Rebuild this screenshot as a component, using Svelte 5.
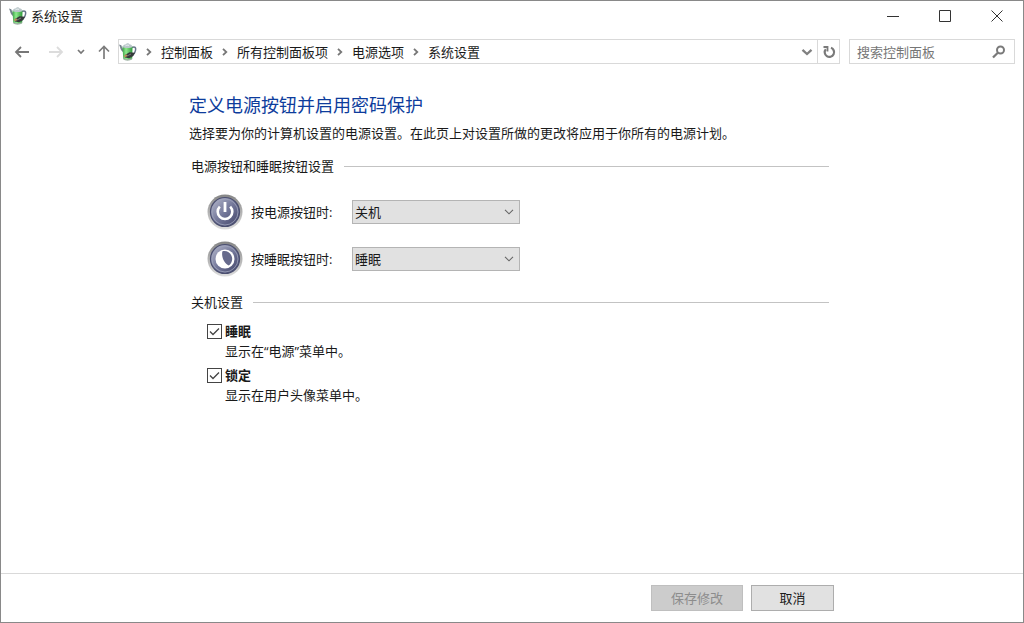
<script lang="ts">
	const crumbs = ['控制面板', '所有控制面板项', '电源选项', '系统设置'];
	const actions = ['不采取任何操作', '睡眠', '休眠', '关机', '关闭显示器'];

	let buttons = $state([
		{ id: 'power', label: '按电源按钮时:', value: '关机' },
		{ id: 'sleep', label: '按睡眠按钮时:', value: '睡眠' }
	]);

	let options = $state([
		{ id: 'opt-sleep', label: '睡眠', hint: '显示在“电源”菜单中。', checked: true },
		{ id: 'opt-lock', label: '锁定', hint: '显示在用户头像菜单中。', checked: true }
	]);

	let query = $state('');
</script>

{#snippet kettle()}
	<svg class="kettle" width="18" height="18" viewBox="0 0 18 18" aria-hidden="true">
		<defs>
			<linearGradient id="kettle-body">
				<stop offset="0" stop-color="#3da447" />
				<stop offset="0.35" stop-color="#8eea8c" />
				<stop offset="1" stop-color="#2f9a3c" />
			</linearGradient>
		</defs>
		<path d="M13 4.5c3-1.4 4 .2 3.600 2.500-.3 2-1.300 4-3 5.500" fill="none" stroke="#68748a" stroke-width="1.500" />
		<path d="M0 1.500l2.300.8 1 2.700 1.500 1.500v3C2.500 8.500 1.500 6.500 1 4z" fill="#75838c" />
		<path d="M3.500 3.500h10l-.3 12c-1 2-8 2-9 0z" fill="url(#kettle-body)" />
		<path d="M4.200 15c2 1.500 7 1.500 9 0v1.300c-2 1.900-7.500 1.900-9 0z" fill="#9fb3a4" />
		<path d="M3.500 4c.5-2 2-2.500 3.500-2.800C7.500 0 10 0 10.300 1.200c1.700.3 3 1 3.200 2.800-2 1.300-8 1.300-10 0z" fill="#b9c6c9" />
		<path d="M6.500 2.800c1-.8 2.500-.8 3.500-.4" fill="none" stroke="#f2f7f7" />
		<path d="M6 12l4.500-2.700 5.500.5-2 3.500-4 2-4-.8z" fill="#35393a" />
		<path d="M4.500 13.300l2.500-2 1.500 1-1.500 2z" fill="#b88b58" />
		<path d="M8 13l4-2" stroke="#777e78" />
	</svg>
{/snippet}

{#snippet chevron()}
	<svg class="chevron" width="6" height="8" viewBox="0 0 6 8" aria-hidden="true">
		<path d="M1 .8 4.300 4 1 7.200" fill="none" stroke="#777" stroke-width="1.800" />
	</svg>
{/snippet}

<div class="window">
	<header class="titlebar">
		{@render kettle()}
		<span class="caption">系统设置</span>
		<button aria-label="最小化">
			<svg width="12" height="12" viewBox="0 0 12 12"><path d="M0 6.500h12" /></svg>
		</button>
		<button aria-label="最大化">
			<svg width="12" height="12" viewBox="0 0 12 12"><path d="M.5.5h11v11H.5z" /></svg>
		</button>
		<button aria-label="关闭">
			<svg width="12" height="12" viewBox="0 0 12 12"><path d="M.5.5l11 11M11.500.5l-11 11" /></svg>
		</button>
	</header>

	<div class="toolbar">
		<div class="history">
			<button aria-label="后退">
				<svg width="16" height="12" viewBox="0 0 16 12"><path d="M15 6H2M7 1 2 6l5 5" stroke="#777" stroke-width="1.800" /></svg>
			</button>
			<button aria-label="前进" disabled>
				<svg width="16" height="12" viewBox="0 0 16 12"><path d="M1 6h13M9 1l5 5-5 5" stroke="#dcdcdc" stroke-width="1.800" /></svg>
			</button>
			<button class="recent" aria-label="最近浏览的位置">
				<svg width="8" height="6" viewBox="0 0 8 6"><path d="M1 1l3 3 3-3" stroke="#777" stroke-width="1.700" /></svg>
			</button>
			<button class="up" aria-label="上移">
				<svg width="12" height="14" viewBox="0 0 12 14"><path d="M6 14V1.500M1 6.500l5-5 5 5" stroke="#7c7c7c" stroke-width="1.700" /></svg>
			</button>
		</div>

		<div class="address">
			<nav aria-label="地址">
				{@render kettle()}
				{#each crumbs as crumb}
					{@render chevron()}
					<a href="#top">{crumb}</a>
				{/each}
			</nav>
			<button aria-label="以前的位置">
				<svg width="12" height="8" viewBox="0 0 12 8"><path d="M1.500 1.800 6 6l4.500-4.200" stroke="#808080" stroke-width="2.300" /></svg>
			</button>
			<button class="refresh" aria-label="刷新">
				<svg width="14" height="14" viewBox="0 0 14 14">
					<path d="M9 2.800A4.700 4.700 0 1 1 3.800 4.200" stroke="#7a7a7a" stroke-width="2.200" />
					<path d="M1.500 2h4v4.500" stroke="#7a7a7a" stroke-width="1.800" />
				</svg>
			</button>
		</div>

		<div class="search">
			<input type="text" aria-label="搜索控制面板" placeholder="搜索控制面板" bind:value={query} />
			<button aria-label="搜索">
				<svg width="14" height="14" viewBox="0 0 14 14">
					<circle cx="8.500" cy="5" r="3.500" stroke="#7a7a7a" stroke-width="2" />
					<path d="M5.800 7.800 1 12.500" stroke="#7a7a7a" stroke-width="2.300" />
				</svg>
			</button>
		</div>
	</div>

	<main>
		<h1>定义电源按钮并启用密码保护</h1>
		<p class="intro">选择要为你的计算机设置的电源设置。在此页上对设置所做的更改将应用于你所有的电源计划。</p>

		<h2>电源按钮和睡眠按钮设置</h2>
		<div class="rows">
			{#each buttons as button (button.id)}
				<div class="row">
					<svg width="36" height="36" viewBox="0 0 36 36" aria-hidden="true">
						<defs>
							<linearGradient id="rim-{button.id}" x1="0" y1="0" x2="0" y2="1">
								<stop offset="0" stop-color="#858585" />
								<stop offset="1" stop-color="#dedede" />
							</linearGradient>
							<linearGradient id="face-{button.id}" x1="0" y1="0" x2="1" y2="1">
								<stop offset="0" stop-color="#b9bccf" />
								<stop offset="0.5" stop-color="#74789a" />
								<stop offset="1" stop-color="#3d4064" />
							</linearGradient>
						</defs>
						<circle cx="18" cy="18" r="17.500" fill="url(#rim-{button.id})" />
						<circle cx="18" cy="18" r="14.500" fill="url(#face-{button.id})" stroke="#4b4f70" stroke-width="1.200" />
						<circle cx="18" cy="18" r="13" fill="none" stroke="#a0a4bd" stroke-width="0.800" />
						{#if button.id === 'power'}
							<path d="M12.800 12.600a7.300 7.300 0 1 0 10.400 0" fill="none" stroke="#fff" stroke-width="2.600" />
							<path d="M18 8v10" stroke="#fff" stroke-width="2.800" />
						{:else}
							<circle cx="18" cy="18" r="9.500" fill="#fff" />
							<path d="M15.300 10.500c3.700-1.700 9.700 1.500 9.900 7.300.1 3-1.700 5.800-3.400 6.600-4.300-2-7.500-7.400-6.500-13.900z" fill="#666a8c" />
						{/if}
					</svg>
					<label for={button.id}>{button.label}</label>
					<div class="select">
						<select id={button.id} bind:value={button.value}>
							{#each actions as action}
								<option>{action}</option>
							{/each}
						</select>
						<svg width="10" height="6" viewBox="0 0 10 6" aria-hidden="true">
							<path d="M1 .8l4 4 4-4" fill="none" stroke="#666" stroke-width="1.100" />
						</svg>
					</div>
				</div>
			{/each}
		</div>

		<h2>关机设置</h2>
		<div class="options">
			{#each options as option (option.id)}
				<div class="option">
					<span class="check">
						<input type="checkbox" id={option.id} bind:checked={option.checked} aria-describedby="{option.id}-hint" />
						<svg width="15" height="15" viewBox="0 0 15 15" aria-hidden="true">
							<path d="M3 7.500l3 3 6-6" fill="none" stroke="#444" stroke-width="1.300" />
						</svg>
					</span>
					<label for={option.id}>{option.label}</label>
					<p id="{option.id}-hint">{option.hint}</p>
				</div>
			{/each}
		</div>
	</main>

	<footer>
		<div class="actions">
			<button class="save" disabled>保存修改</button>
			<button>取消</button>
		</div>
	</footer>
</div>

<style>
	:global(body) {
		margin: 0;
		background: #fff;
	}

	.window {
		box-sizing: border-box;
		min-height: 100vh;
		display: flex;
		flex-direction: column;
		border: 1px solid #898989;
		background: #fff;
		color: #1a1a1a;
		font-family: 'Open Sans', 'Noto Sans CJK SC', sans-serif;
		font-size: 13px;
		line-height: 20px;
	}

	button,
	input,
	select {
		box-sizing: border-box;
		margin: 0;
		padding: 0;
		border: 0;
		background: none;
		color: inherit;
		font: inherit;
	}

	svg {
		display: block;
		flex: none;
	}

	button svg {
		fill: none;
	}

	.titlebar {
		display: flex;
		align-items: center;
		height: 30px;
		padding-left: 8px;
	}

	.caption {
		flex: 1;
		margin-left: 4px;
	}

	.titlebar button {
		display: grid;
		place-items: center;
		width: 52px;
		height: 30px;
		stroke: #333;
	}

	.toolbar {
		display: flex;
		padding: 8px 8px 0 12px;
	}

	.history {
		display: flex;
		align-items: center;
		width: 105px;
	}

	.history button {
		display: grid;
		place-items: center;
		width: 18px;
		height: 25px;
		margin-right: 16px;
	}

	.history button.recent {
		width: 8px;
		margin: 0 12px 0 -4px;
	}

	.history button.up {
		width: 14px;
		margin: 0;
	}

	.address,
	.search {
		box-sizing: border-box;
		display: flex;
		height: 25px;
		border: 1px solid #d9d9d9;
	}

	.address {
		flex: 1;
		margin-right: 9px;
	}

	.address nav {
		flex: 1;
		display: flex;
		align-items: center;
	}

	.address .chevron {
		margin: 0 9px;
	}

	.address a {
		color: inherit;
		text-decoration: none;
	}

	.address button,
	.search button {
		display: grid;
		place-items: center;
		width: 20px;
	}

	.address .refresh {
		width: 22px;
		border-left: 1px solid #d9d9d9;
	}

	.search {
		width: 166px;
		padding: 0 5px 0 7px;
	}

	.search input {
		flex: 1;
		min-width: 0;
		outline: 0;
	}

	.search input::placeholder {
		color: #767676;
		opacity: 1;
	}

	main {
		flex: 1;
		box-sizing: border-box;
		width: 100%;
		max-width: 828px;
		padding: 29px 0 28px 188px;
	}

	h1 {
		margin: 0;
		color: #0d3c9c;
		font-size: 18px;
		font-weight: 400;
		line-height: 24px;
	}

	p {
		margin: 0;
	}

	.intro {
		margin-top: 6px;
	}

	h2 {
		display: flex;
		align-items: center;
		gap: 10px;
		margin: 13px 0 0 2px;
		font-size: 13px;
		font-weight: 400;
	}

	h2::after {
		content: '';
		flex: 1;
		height: 1px;
		background: #c3c3c3;
	}

	.rows {
		display: flex;
		flex-direction: column;
		gap: 11px;
		margin: 18px 0 15px 18px;
	}

	.row {
		display: flex;
		align-items: center;
		gap: 8px;
	}

	.row label {
		width: 93px;
	}

	.select {
		position: relative;
	}

	.select select {
		appearance: none;
		display: block;
		width: 168px;
		height: 24px;
		padding: 0 20px 0 2px;
		border: 1px solid #b4b4b4;
		border-radius: 0;
		background: #e1e1e1;
	}

	.select svg {
		position: absolute;
		top: 9px;
		right: 6px;
		pointer-events: none;
	}

	.options {
		display: flex;
		flex-direction: column;
		gap: 4px;
		margin: 9px 0 0 18px;
	}

	.option {
		display: grid;
		grid-template-columns: 15px 1fr;
		column-gap: 3px;
		align-items: center;
	}

	.option label {
		justify-self: start;
		font-weight: 700;
	}

	.option p {
		grid-column: 2;
	}

	.check {
		position: relative;
		height: 15px;
	}

	.check input {
		appearance: none;
		display: block;
		width: 15px;
		height: 15px;
		border: 1px solid #444;
		background: #fff;
	}

	.check svg {
		position: absolute;
		inset: 0;
		visibility: hidden;
		pointer-events: none;
	}

	.check input:checked + svg {
		visibility: visible;
	}

	footer {
		border-top: 1px solid #d9d9d9;
		padding: 11px 0;
	}

	.actions {
		display: flex;
		justify-content: flex-end;
		gap: 8px;
		max-width: 833px;
	}

	.actions button {
		width: 83px;
		height: 26px;
		border: 1px solid #adadad;
		background: #e1e1e1;
	}

	.actions .save {
		width: 92px;
		border-color: #bfbfbf;
		background: #ccc;
		color: #8c8c8c;
	}
</style>
